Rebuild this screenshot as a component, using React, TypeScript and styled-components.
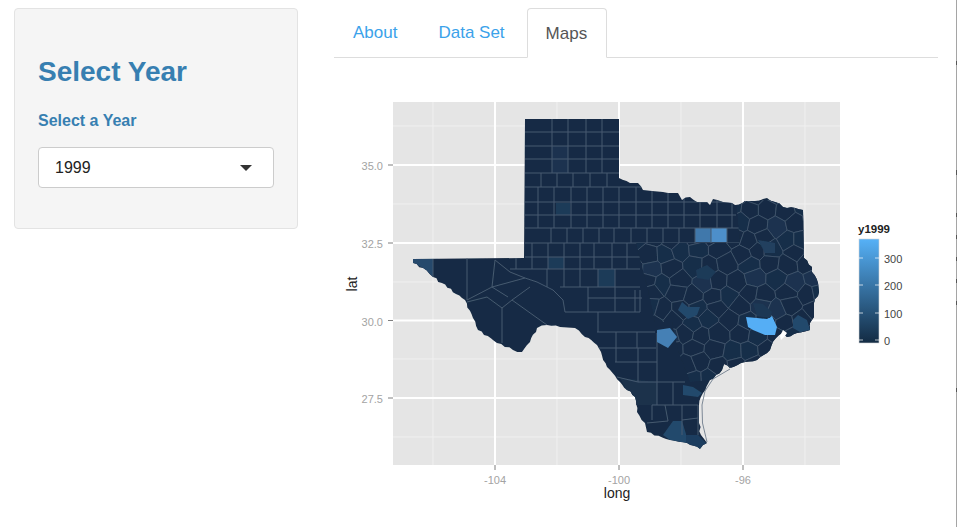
import React, { FC } from 'react';
import styled, { createGlobalStyle } from 'styled-components';

const GlobalStyle = createGlobalStyle`
    html, body {
        margin: 0;
        height: 100%;
        background: #fff;
        overflow: hidden;
        font-family: "Liberation Sans", Arial, sans-serif;
    }
`;

// the grey window edge on the right, with its dark nicks
const Page = styled.div`
    box-sizing: border-box;
    display: flex;
    align-items: flex-start;
    gap: 36px;
    width: 957px;
    height: 527px;
    padding: 8px 0 0 14px;
    background: linear-gradient(
            to bottom,
            #a5a5a5 0 61px,
            #555 61px 65px,
            #a5a5a5 65px 170px,
            #555 170px 175px,
            #a5a5a5 175px 213px,
            #555 213px 217px,
            #a5a5a5 217px 235px,
            #555 235px 239px,
            #a5a5a5 239px 257px,
            #555 257px 261px,
            #a5a5a5 261px 279px,
            #555 279px 283px,
            #a5a5a5 283px 301px,
            #555 301px 305px,
            #a5a5a5 305px 388px,
            #555 388px 392px,
            #a5a5a5 392px
        )
        right top / 1px 100% no-repeat;
`;

const Sidebar = styled.aside`
    box-sizing: border-box;
    width: 284px;
    height: 221px;
    padding: 48px 23px 0;
    background: #f5f5f5;
    border: 1px solid #e3e3e3;
    border-radius: 4px;
`;

const Title = styled.h2`
    margin: 0 0 24px;
    font-size: 28px;
    line-height: 30px;
    font-weight: 700;
    color: #377fb1;
`;

const FieldLabel = styled.label`
    display: block;
    margin-bottom: 16px;
    font-size: 16px;
    line-height: 20px;
    font-weight: 700;
    color: #377fb1;
`;

const SelectBox = styled.div`
    box-sizing: border-box;
    display: flex;
    align-items: center;
    justify-content: space-between;
    width: 236px;
    height: 41px;
    padding: 0 21px 0 16px;
    background: #fff;
    border: 1px solid #ccc;
    border-radius: 4px;
    font-size: 16px;
    color: #222;
`;

const Caret = styled.span`
    width: 0;
    height: 0;
    border-left: 6px solid transparent;
    border-right: 6px solid transparent;
    border-top: 6px solid #333;
`;

const Main = styled.main`
    width: 622px;
`;

const TabBar = styled.nav`
    display: flex;
    gap: 2px;
    box-sizing: border-box;
    width: 604px;
    height: 50px;
    border-bottom: 1px solid #ddd;
`;

const Tab = styled.a<{ $active?: boolean }>`
    box-sizing: border-box;
    height: ${(p) => (p.$active ? '50px' : '49px')};
    padding: ${(p) => (p.$active ? '0 19px 0 18px' : '0 20px 0 19px')};
    line-height: 49px;
    font-size: 17px;
    color: ${(p) => (p.$active ? '#555' : '#3ba2ea')};
    background: ${(p) => (p.$active ? '#fff' : 'transparent')};
    border: ${(p) => (p.$active ? '1px solid #ddd' : 'none')};
    border-bottom: ${(p) => (p.$active ? '1px solid #fff' : 'none')};
    border-radius: 4px 4px 0 0;
`;

const ChartSvg = styled.svg`
    display: block;
    width: 622px;
    height: 469px;
`;

const TickLabel = styled.text`
    font-size: 11px;
    fill: #a3a3a3;
`;

const AxisTitle = styled.text`
    font-size: 14px;
    fill: #222;
`;

const LegendTitle = styled.text`
    font-size: 11.5px;
    font-weight: 700;
    fill: #222;
`;

const LegendLabel = styled.text`
    font-size: 11px;
    fill: #444;
`;

type Pt = [number, number];

const noise = (i: number, j: number) => {
    const v = Math.sin(i * 12.9898 + j * 78.233) * 43758.5453;
    return v - Math.floor(v);
};

const OUTLINE: Pt[] = [
    [525, 119], [619, 119], [619, 178], [630, 183], [638, 183], [643, 190], [652, 191], [663, 192], [668, 193],
    [678, 193], [682, 200], [690, 197], [697, 202], [707, 202], [710, 205], [713, 199], [723, 202], [732, 203],
    [735, 205], [745, 201], [755, 201], [767, 198], [775, 202], [783, 207], [803, 210], [804, 258], [812, 267],
    [812, 272], [818, 283], [819, 292], [814, 303], [814, 317], [810, 323], [810, 330], [797, 333], [787, 337],
    [782, 333], [776, 338], [770, 350], [757, 360], [745, 362], [730, 368], [724, 364], [722, 370], [710, 380],
    [703, 393], [699, 405], [699, 423], [701, 435], [707, 443], [700, 449], [687, 443], [670, 440], [647, 432],
    [645, 423], [637, 412], [635, 397], [620, 382], [607, 367], [597, 345], [585, 337], [575, 328], [560, 327],
    [547, 325], [537, 328], [530, 342], [522, 352], [513, 350], [497, 343], [478, 330], [473, 318], [465, 300],
    [433, 277], [423, 268], [413, 263], [413, 259], [524, 258],
];

// river and coast edges wobble; the surveyed straight edges stay straight
const roughen = (points: Pt[]) => {
    const out: Pt[] = [];
    points.forEach((a, k) => {
        const b = points[(k + 1) % points.length];
        out.push(a);
        const dx = b[0] - a[0];
        const dy = b[1] - a[1];
        const len = Math.hypot(dx, dy);
        if (Math.abs(dx) < 2 || Math.abs(dy) < 2 || len < 6) return;
        const steps = Math.floor(len / 3.5);
        for (let s = 1; s < steps; s++) {
            const t = s / steps;
            const off = (noise(k, s) - 0.5) * 2.2;
            out.push([a[0] + dx * t - (dy / len) * off, a[1] + dy * t + (dx / len) * off]);
        }
    });
    return out;
};

const TEXAS = `M${roughen(OUTLINE)
    .map((p) => `${p[0].toFixed(1)} ${p[1].toFixed(1)}`)
    .join(' L')} Z`;

// rectangular counties of the panhandle and north: y range and the x of each divider
const BANDS: [number, number, number[]][] = [
    [119, 173, [552, 568, 586, 602]],
    [173, 187, [541, 557, 573, 590, 607]],
    [187, 228, [538, 554, 571, 587, 603, 619, 636, 652, 668, 684, 700, 717, 732]],
    [228, 243, [551, 567, 583, 599, 614, 631, 647, 663, 679, 695, 711, 727]],
    [243, 257, [532, 548, 564, 580, 594, 612, 627]],
    [257, 269, [516, 532, 548, 564, 580, 594, 612, 627]],
    [269, 287, [547, 564, 580, 598, 615]],
];

const ROWS: [number, number, number][] = [
    [132, 525, 619],
    [146, 525, 619],
    [159, 525, 619],
    [173, 525, 619],
    [187, 525, 736],
    [202, 525, 736],
    [215, 525, 736],
    [228, 525, 740],
    [243, 525, 740],
    [257, 525, 640],
    [269, 510, 640],
    [287, 560, 640],
    [298, 588, 642],
    [312, 565, 640],
    [332, 597, 655],
    [348, 598, 656],
    [362, 615, 657],
    [382, 638, 685],
    [405, 652, 698],
];

const LINES: string[] = [
    '433,259 433,277',
    '467,258 467,300 492,287 525,278',
    '467,302 487,297 502,308 512,300 530,287',
    '502,308 502,343',
    '512,300 547,325',
    '508,297 492,287 495,260 510,272 525,278 537,282 553,290 563,300 565,312',
    '588,287 588,312',
    '615,287 615,312',
    '635,290 635,312',
    '598,312 598,332',
    '616,332 616,362',
    '637,332 637,348',
    '638,348 638,382',
    '657,333 657,405',
    '617,377 638,382',
    '673,382 673,405',
    '652,405 652,420',
    '665,405 668,421',
    '647,423 668,421',
    '682,405 682,435',
    '682,420 698,418',
    '698,405 698,435',
    '640,290 640,312',
];

const COUNTIES: [string, string][] = [
    ['413,259 433,259 433,277 423,268 413,263', '#27496c'],
    ['556,203 570,203 570,215 556,215', '#1f3a58'],
    ['552,146 568,146 568,173 552,173', '#1b3350'],
    ['548,257 564,257 564,269 548,269', '#1e3a58'],
    ['598,269 615,269 615,287 598,287', '#1e3a58'],
    ['695,228 711,228 711,242 695,242', '#3f78ab'],
    ['711,228 727,228 727,242 711,242', '#4d8fca'],
    ['620,378 657,382 657,405 635,405', '#1b324c'],
    ['673,421 682,421 686,434 686,443 670,440 663,435', '#24496c'],
    ['686,435 698,435 707,444 700,449 686,443', '#1f3e5e'],
    ['683,385 693,387 702,393 698,397 683,395', '#24496c'],
];

const BIG_COUNTIES: [string, string][] = [
    ['746,317 757,318 767,319 772,316 777,327 775,335 765,335 753,330 748,327', '#55aef5'],
    ['657,330 670,328 677,337 668,348 657,342', '#4580b5'],
    ['678,310 682,302 688,307 700,307 697,315 688,319', '#24496c'],
    ['793,320 798,315 807,320 810,330 800,332 793,328', '#24496c'],
    ['696,270 707,265 716,272 709,280 697,278', '#1e3a58'],
    ['758,240 775,243 775,253 765,253', '#20405f'],
    ['753,303 763,304 772,312 770,318 757,316', '#1d3855'],
];

// irregular counties of the east: voronoi cells around jittered seeds, clipped to the state
const clipHalf = (poly: Pt[], a: Pt, b: Pt): Pt[] => {
    const mx = (a[0] + b[0]) / 2;
    const my = (a[1] + b[1]) / 2;
    const nx = b[0] - a[0];
    const ny = b[1] - a[1];
    const side = (p: Pt) => (p[0] - mx) * nx + (p[1] - my) * ny;
    const out: Pt[] = [];
    poly.forEach((p, k) => {
        const q = poly[(k + 1) % poly.length];
        const sp = side(p);
        const sq = side(q);
        if (sp <= 0) out.push(p);
        if (sp <= 0 !== sq <= 0) {
            const t = sp / (sp - sq);
            out.push([p[0] + (q[0] - p[0]) * t, p[1] + (q[1] - p[1]) * t]);
        }
    });
    return out;
};

const buildMesh = () => {
    const seeds: Pt[] = [];
    for (let j = 0; j < 15; j++) {
        for (let i = 0; i < 13; i++) {
            seeds.push([
                628 + i * 18.5 + (j % 2) * 9 + (noise(i, j) - 0.5) * 9,
                196 + j * 14 + (noise(j + 40, i + 9) - 0.5) * 8,
            ]);
        }
    }
    return seeds.map((seed, k) => {
        let cell: Pt[] = [
            [seed[0] - 40, seed[1] - 40],
            [seed[0] + 40, seed[1] - 40],
            [seed[0] + 40, seed[1] + 40],
            [seed[0] - 40, seed[1] + 40],
        ];
        seeds.forEach((other, m) => {
            if (m !== k && Math.hypot(other[0] - seed[0], other[1] - seed[1]) < 70) {
                cell = clipHalf(cell, seed, other);
            }
        });
        const n = noise(k + 3, 7);
        return {
            points: cell.map((p) => `${p[0].toFixed(1)},${p[1].toFixed(1)}`).join(' '),
            fill: n > 0.93 ? '#1b334f' : n > 0.65 ? '#182e49' : '#172b44',
        };
    });
};

const MESH = buildMesh();
const X_MAJOR = [495, 619, 743];
const X_MINOR = [433, 557, 681, 805];
const Y_MAJOR: [number, string][] = [
    [165, '35.0'],
    [243, '32.5'],
    [320.5, '30.0'],
    [398, '27.5'],
];
const Y_MINOR = [126, 204, 282, 359, 437];
const LEGEND: [number, string][] = [
    [258, '300'],
    [285, '200'],
    [313, '100'],
    [340, '0'],
];

const TexasChart: FC = () => (
    <ChartSvg viewBox="334 58 622 469">
        <defs>
            <clipPath id="texas">
                <path d={TEXAS} />
            </clipPath>
            <clipPath id="east">
                <polygon points="736,200 825,200 825,345 730,378 690,382 678,350 672,322 655,322 648,290 636,243 740,243" />
            </clipPath>
            <linearGradient id="scale" x1="0" y1="0" x2="0" y2="1">
                <stop offset="0" stopColor="#56b1f7" />
                <stop offset="1" stopColor="#132b43" />
            </linearGradient>
            <filter id="soft" x="-2%" y="-2%" width="104%" height="104%">
                <feGaussianBlur stdDeviation="0.4" />
            </filter>
        </defs>

        <rect x="393" y="102" width="447" height="363" fill="#e5e5e5" />
        {X_MINOR.map((x) => (
            <line key={x} x1={x} x2={x} y1="102" y2="465" stroke="#f0f0f0" />
        ))}
        {Y_MINOR.map((y) => (
            <line key={y} x1="393" x2="840" y1={y} y2={y} stroke="#f0f0f0" />
        ))}
        {X_MAJOR.map((x) => (
            <line key={x} x1={x} x2={x} y1="102" y2="465" stroke="#fff" strokeWidth="2" />
        ))}
        {Y_MAJOR.map(([y]) => (
            <line key={y} x1="393" x2="840" y1={y} y2={y} stroke="#fff" strokeWidth="2" />
        ))}

        <g filter="url(#soft)">
            <path d={TEXAS} fill="#172b44" />
            <g clipPath="url(#texas)">
                {COUNTIES.map(([points, fill]) => (
                    <polygon key={points} points={points} fill={fill} />
                ))}
                {BANDS.map(([y0, y1, xs]) =>
                    xs.map((x) => <line key={`${y0}-${x}`} x1={x} x2={x} y1={y0} y2={y1} stroke="#465a70" />),
                )}
                {ROWS.map(([y, x0, x1]) => (
                    <line key={y} x1={x0} x2={x1} y1={y} y2={y} stroke="#465a70" />
                ))}
                {LINES.map((points) => (
                    <polyline key={points} points={points} fill="none" stroke="#465a70" />
                ))}
                <g clipPath="url(#east)">
                    {MESH.map((cell) => (
                        <polygon key={cell.points} points={cell.points} fill={cell.fill} stroke="#465a70" strokeWidth="0.75" />
                    ))}
                </g>
                {BIG_COUNTIES.map(([points, fill]) => (
                    <polygon key={points} points={points} fill={fill} />
                ))}
            </g>
            <polyline
                points="730,369 713,379 705,391 702,405 702.5,423 707,442"
                fill="none"
                stroke="#6f7d8c"
                strokeWidth="0.9"
            />
            <polygon points="780,336 783,330 787,333 785,336 781,340" fill="#fff" />
        </g>

        {Y_MAJOR.map(([y, label]) => (
            <g key={label}>
                <line x1="388" x2="393" y1={y} y2={y} stroke="#7f7f7f" />
                <TickLabel x="383" y={y + 5} textAnchor="end">
                    {label}
                </TickLabel>
            </g>
        ))}
        {X_MAJOR.map((x) => (
            <g key={x}>
                <line x1={x} x2={x} y1="465" y2="470" stroke="#7f7f7f" />
                <TickLabel x={x} y="484" textAnchor="middle">
                    {x === 495 ? '-104' : x === 619 ? '-100' : '-96'}
                </TickLabel>
            </g>
        ))}
        <AxisTitle x="617" y="498" textAnchor="middle">
            long
        </AxisTitle>
        <AxisTitle x="357" y="284" textAnchor="middle" transform="rotate(-90 357 284)">
            lat
        </AxisTitle>

        <LegendTitle x="858" y="233">
            y1999
        </LegendTitle>
        <rect x="859" y="239" width="20" height="104" fill="url(#scale)" stroke="#d0d3d8" strokeWidth="0.6" />
        {LEGEND.map(([y, label]) => (
            <g key={label}>
                <line x1="859" x2="863" y1={y} y2={y} stroke="#fff" strokeOpacity="0.7" />
                <line x1="875" x2="879" y1={y} y2={y} stroke="#fff" strokeOpacity="0.7" />
                <LegendLabel x="884" y={y + 5}>
                    {label}
                </LegendLabel>
            </g>
        ))}
    </ChartSvg>
);

const App: FC = () => (
    <Page>
        <GlobalStyle />
        <Sidebar>
            <Title>Select Year</Title>
            <FieldLabel>Select a Year</FieldLabel>
            <SelectBox>
                1999
                <Caret />
            </SelectBox>
        </Sidebar>
        <Main>
            <TabBar>
                <Tab>About</Tab>
                <Tab>Data Set</Tab>
                <Tab $active>Maps</Tab>
            </TabBar>
            <TexasChart />
        </Main>
    </Page>
);

export default App;
